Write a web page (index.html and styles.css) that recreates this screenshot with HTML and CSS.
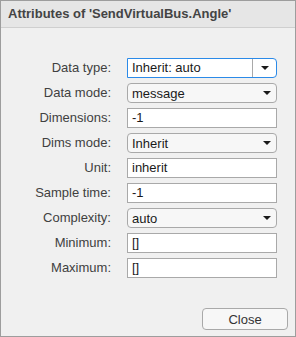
FILE: index.html
```html
<!DOCTYPE html>
<html lang="en">
<head>
  <meta charset="UTF-8" />
  <title>Attributes of 'SendVirtualBus.Angle'</title>
  <link rel="stylesheet" href="styles.css">
</head>
<body>
  <div class="window">
    <div class="title-bar">Attributes of 'SendVirtualBus.Angle'</div>

    <div class="form">
      <label class="label">Data type:</label>
      <div class="combo focused">
        <span class="combo-text">Inherit: auto</span>
        <span class="combo-btn"><span class="arrow"></span></span>
      </div>

      <label class="label">Data mode:</label>
      <div class="select"><span>message</span><span class="arrow"></span></div>

      <label class="label">Dimensions:</label>
      <div class="field">-1</div>

      <label class="label">Dims mode:</label>
      <div class="select"><span>Inherit</span><span class="arrow"></span></div>

      <label class="label">Unit:</label>
      <div class="field">inherit</div>

      <label class="label">Sample time:</label>
      <div class="field">-1</div>

      <label class="label">Complexity:</label>
      <div class="select"><span>auto</span><span class="arrow"></span></div>

      <label class="label">Minimum:</label>
      <div class="field">[]</div>

      <label class="label">Maximum:</label>
      <div class="field">[]</div>
    </div>

    <div class="footer">
      <button class="btn">Close</button>
    </div>
  </div>
</body>
</html>
```

FILE: styles.css
```css
body {
  margin: 0;
  font-family: "Liberation Sans", Arial, sans-serif;
  background-color: #f0f0f0;
}

.window {
  width: 296px;
  height: 337px;
  box-sizing: border-box;
  border: 1px solid #9d9d9d;
  background-color: #f0f0f0;
  display: flex;
  flex-direction: column;
}

.title-bar {
  height: 26px;
  line-height: 26px;
  padding-left: 7px;
  background-color: #e6e6e6;
  border-bottom: 1px solid #cfcfcf;
  font-size: 13px;
  font-weight: bold;
  color: #444;
}

.form {
  display: grid;
  grid-template-columns: 110px 150px;
  column-gap: 16px;
  row-gap: 5px;
  grid-auto-rows: 20px;
  padding-top: 30px;
}

.label {
  text-align: right;
  font-size: 13px;
  color: #404040;
  line-height: 20px;
}

.field, .select, .combo {
  box-sizing: border-box;
  height: 20px;
  font-size: 13px;
  color: #1a1a1a;
}

.field {
  background-color: #fff;
  border: 1px solid #a9a9a9;
  padding-left: 4px;
  line-height: 18px;
}

.select {
  display: flex;
  align-items: center;
  justify-content: space-between;
  background-color: #f7f7f7;
  border: 1px solid #a9a9a9;
  border-radius: 4px;
  padding: 0 5px 0 4px;
}

.combo {
  display: flex;
  border: 1px solid #a9a9a9;
  border-radius: 0 4px 4px 0;
  background-color: #fff;
}

.combo.focused {
  border-color: #2b8ae8;
}

.combo-text {
  flex: 1;
  padding-left: 4px;
  line-height: 18px;
}

.combo-btn {
  width: 23px;
  border-left: 1px solid #a9a9a9;
  display: flex;
  align-items: center;
  justify-content: center;
}

.arrow {
  width: 0;
  height: 0;
  border-left: 4px solid transparent;
  border-right: 4px solid transparent;
  border-top: 4px solid #1a1a1a;
}

.footer {
  margin-top: auto;
  display: flex;
  justify-content: flex-end;
  padding: 0 7px 6px 0;
}

.btn {
  width: 86px;
  height: 22px;
  font-family: "Liberation Sans", Arial, sans-serif;
  font-size: 13px;
  color: #333;
  background-color: #f7f7f7;
  border: 1px solid #a9a9a9;
  border-radius: 4px;
}
```
